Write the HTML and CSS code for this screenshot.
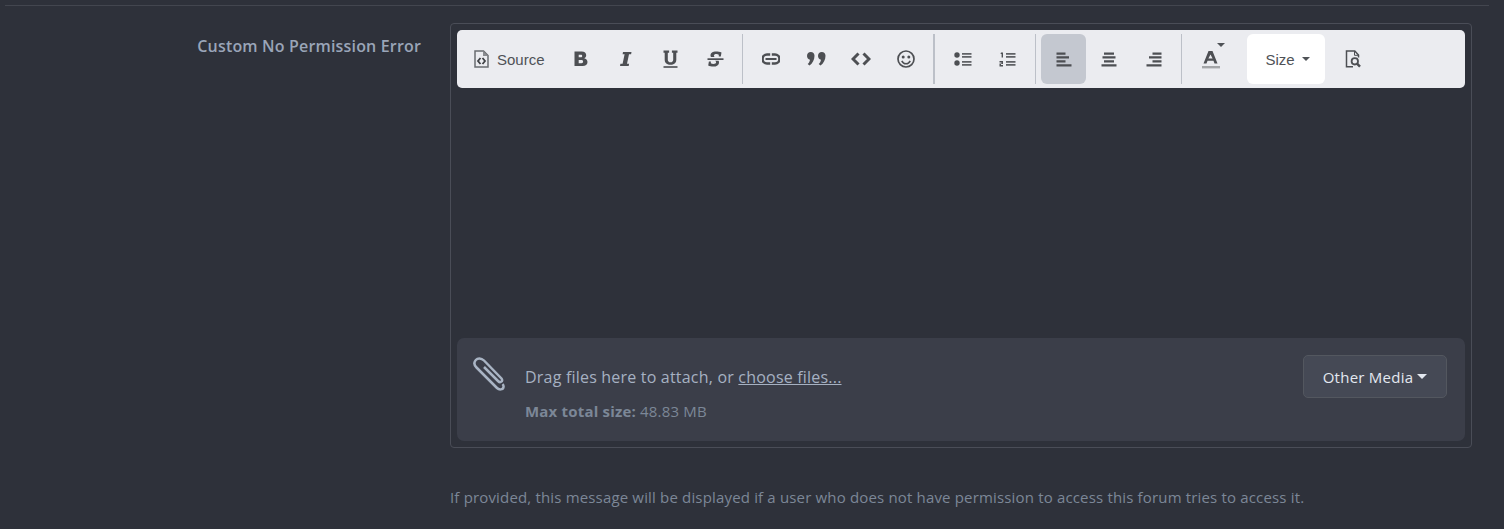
FILE: index.html
```html
<!DOCTYPE html>
<html lang="en">
<head>
<meta charset="utf-8">
<title>Custom No Permission Error</title>
<link rel="stylesheet" href="styles.css">
</head>
<body>
<hr class="rule">
<div class="row">
  <div class="label">Custom No Permission Error</div>
  <div class="field">
    <div class="editor">
      <div class="toolbar">
        <button class="btn source">
          <svg viewBox="0 0 15 18" width="15" height="18"><path d="M1 1h8.500l4.500 4.500V17H1z" fill="none" stroke="#6a6c70" stroke-width="1.500"/><path d="M9 1v5h5" fill="#8a8c90"/><path d="M6.500 8 4 11l2.500 3M8.500 8 11 11l-2.500 3" fill="none" stroke="#404246" stroke-width="1.800"/></svg>
          <span>Source</span>
        </button>
        <button class="btn"><svg viewBox="0 0 14 16" width="14" height="16"><path d="M.5.500h7.200c2.900 0 4.500 1.400 4.500 3.700 0 1.500-.8 2.600-2 3.100 1.800.4 3.300 1.700 3.300 3.800 0 2.700-2 3.900-4.900 3.900H.5zM4.700 3.700v2.600h2.200c.9 0 1.300-.5 1.300-1.300s-.4-1.300-1.300-1.300zm0 5.300v3.300h2.800c1 0 1.600-.6 1.600-1.700 0-1-.6-1.600-1.600-1.600z" fill="#4d4f53"/></svg></button>
        <button class="btn"><svg viewBox="0 0 14 16" width="14" height="16"><path d="M4 1h8.500l-.4 2.300H10L8 12.700h2.100l-.4 2.300H1l.4-2.300h2.200L5.600 3.300H3.600z" fill="#4d4f53"/></svg></button>
        <button class="btn"><svg viewBox="0 0 15 18" width="15" height="18"><path d="M.5.500h5.600v2.200H4.800v6.800c0 1.900 1 2.800 2.700 2.800s2.700-.9 2.700-2.800V2.700H8.900V.5h5.600v2.200h-1.200v7c0 3.400-2.400 5-5.800 5s-5.800-1.600-5.800-5v-7H.5z" fill="#4d4f53"/><rect x="0.500" y="16" width="14" height="2" fill="#6a6c70"/></svg></button>
        <button class="btn"><svg viewBox="0 0 17 16" width="17" height="16"><path d="M14.500 1.500l-.7 3.900h-2l0-1.700c-.7-.4-1.500-.6-2.400-.6-1.500 0-2.500.6-2.500 1.600 0 .6.300 1 .9 1.400H4.100C3.700 5.900 3.500 5.200 3.500 4.400 3.500 1.900 5.800.5 9 .5c2 0 4 .4 5.500 1zM11.600 9.800c.3.500.4 1 .4 1.600 0 2.700-2.500 4.200-5.600 4.200-2 0-3.900-.5-5.200-1.200l.7-4h2L3.800 12.300c.7.500 1.600.7 2.600.7 1.700 0 2.700-.6 2.700-1.700 0-.6-.3-1.100-.9-1.500z" fill="#4d4f53"/><rect x="0.500" y="7.300" width="16" height="1.700" fill="#4d4f53"/></svg></button>
        <span class="sep"></span>
        <button class="btn"><svg viewBox="0 0 18 12" width="18" height="12"><path d="M8.200 1.500H5a4.500 4.500 0 0 0 0 9h3.200M9.800 1.500H13a4.500 4.500 0 0 1 0 9H9.800" fill="none" stroke="#4d4f53" stroke-width="2.600"/><path d="M3.500 5h11v2h-11z" fill="#4d4f53"/></svg></button>
        <button class="btn nudge"><svg viewBox="0 0 19 14" width="19" height="14"><path d="M3.800 0C6 0 7.500 1.500 7.500 3.700c0 4-2 7.600-5 9.800L.7 12c1.200-1.200 2-2.300 2.300-4.300C1.300 7.400 0 5.800 0 3.900 0 1.700 1.600 0 3.800 0zM14.800 0C17 0 18.500 1.500 18.500 3.700c0 4-2 7.600-5 9.800L11.700 12c1.200-1.200 2-2.300 2.300-4.300-1.700-.3-3-1.900-3-3.800C11 1.700 12.600 0 14.800 0z" fill="#4d4f53"/></svg></button>
        <button class="btn"><svg viewBox="0 0 20 14" width="20" height="14"><path d="M7.500 1.500 2 7l5.500 5.500M12.500 1.500 18 7l-5.500 5.500" fill="none" stroke="#4d4f53" stroke-width="3"/></svg></button>
        <button class="btn"><svg viewBox="0 0 18 18" width="18" height="18"><circle cx="9" cy="9" r="8" fill="none" stroke="#4d4f53" stroke-width="1.700"/><circle cx="6.200" cy="7" r="1.500" fill="#4d4f53"/><circle cx="11.800" cy="7" r="1.500" fill="#4d4f53"/><path d="M4.800 10.800c1 2 2.500 3 4.200 3s3.200-1 4.200-3" fill="none" stroke="#4d4f53" stroke-width="1.600"/></svg></button>
        <span class="sep thick"></span>
        <button class="btn shift"><svg viewBox="0 0 18 14" width="18" height="14"><circle cx="3" cy="3" r="2.700" fill="#4d4f53"/><circle cx="3" cy="11" r="2.700" fill="#4d4f53"/><path d="M8 1h9.500v1.800H8zM8 3.900h9.500v1.800H8zM8 9h9.500v1.800H8zM8 11.900h9.500v1.800H8z" fill="#606266"/></svg></button>
        <button class="btn shift"><svg viewBox="0 0 17 15" width="17" height="15"><path d="M2 .5h2v5H2.600V2H1.500zM.5 9h3.500v3H2v1h2v1.500H.5v-3h2v-1H.5z" fill="#4d4f53"/><path d="M7 1h9.500v1.800H7zM7 4h9.500v1.800H7zM7 9h9.500v1.800H7zM7 12h9.500v1.800H7z" fill="#606266"/></svg></button>
        <span class="sep"></span>
        <button class="btn active"><svg viewBox="0 0 16 15" width="16" height="15"><path d="M.5 .5h9v2.200h-9zM.5 4.300h12.500v2.200H.5zM.5 8.200h9v2.200h-9zM.5 12.200h15v2.200H.5z" fill="#4d4f53"/></svg></button>
        <button class="btn"><svg viewBox="0 0 16 15" width="16" height="15"><path d="M3 .5h10v2.200H3zM1.500 4.300h13v2.200h-13zM3 8.200h10v2.200H3zM.5 12.200h15v2.200H.5z" fill="#4d4f53"/></svg></button>
        <button class="btn"><svg viewBox="0 0 16 15" width="16" height="15"><path d="M6.500 .5h9v2.200h-9zM3 4.300h12.500v2.200H3zM6.500 8.200h9v2.200h-9zM.5 12.200h15v2.200H.5z" fill="#4d4f53"/></svg></button>
        <span class="sep after"></span>
        <button class="btn color">
          <svg viewBox="0 0 20 19" width="20" height="19"><path d="M7.500 1h4l5 12.500h-3l-1-2.700H6.500l-1 2.700h-3zm2 3.500L7.400 8.500h4.200z" fill="#4d4f53"/><rect x="1" y="16" width="18" height="2.400" fill="#a3a5a8"/></svg>
          <span class="caret small"></span>
        </button>
        <button class="btn size"><span>Size</span><span class="caret"></span></button>
        <button class="btn nudge"><svg viewBox="0 0 17 18" width="17" height="18"><path d="M8 16.800H1.500V1h8.300l3.700 4v2.500" fill="none" stroke="#4d4f53" stroke-width="1.500"/><path d="M9.500 1v4.300h4" fill="none" stroke="#4d4f53" stroke-width="1"/><circle cx="9.800" cy="11.300" r="3.200" fill="none" stroke="#4d4f53" stroke-width="1.800"/><path d="m12 13.700 3 3" stroke="#4d4f53" stroke-width="2.400"/></svg></button>
      </div>
      <div class="area"></div>
      <div class="attach">
        <svg class="clip" viewBox="0 0 32 34" width="32" height="34"><path d="M11 10 25 24c2.500 2.500 5.500 0 3.500-2.500L11 3.500C8 .5 4.500 1 2.800 3 1 5 1 8 3.500 10.500L24 31c2 2 6 2 6.500-1 .2-1-.2-2-1-2.800" fill="none" stroke="#a9b4c4" stroke-width="2.500"/></svg>
        <div class="drop">
          <div class="drag">Drag files here to attach, or <a class="choose">choose files...</a></div>
          <div class="max"><b>Max total size:</b> 48.83 MB</div>
        </div>
        <button class="media">Other Media<span class="caret light"></span></button>
      </div>
    </div>
    <p class="hint">If provided, this message will be displayed if a user who does not have permission to access this forum tries to access it.</p>
  </div>
</div>
</body>
</html>
```
FILE: styles.css
```css
* { box-sizing: border-box; }
html, body { margin: 0; height: 529px; overflow: hidden; }
body {
  background: #2e313a;
  font-family: "Open Sans", "Noto Sans", sans-serif;
  color: #9aa5b5;
}
.rule {
  margin: 5px 15px 0 5px;
  border: 0;
  height: 1px;
  background: #43464f;
}
.row { display: flex; margin-top: 17px; }
.label {
  width: 421px;
  padding-top: 12px;
  text-align: right;
  font-size: 16px;
  line-height: 22px;
  font-weight: 600;
  color: #9aa5b8;
  letter-spacing: .17px;
}
.field { margin-left: 29px; width: 1022px; }
.editor {
  height: 425px;
  border: 1px solid #4a4d57;
  border-radius: 4px;
  padding: 6px;
  display: flex;
  flex-direction: column;
}
.toolbar {
  height: 58px;
  background: #ebecf0;
  border-radius: 5px;
  display: flex;
  align-items: center;
  padding-left: 8px;
  flex: none;
}
.btn {
  width: 45px;
  height: 50px;
  border: 0;
  padding: 0;
  margin: 0;
  background: none;
  border-radius: 6px;
  display: flex;
  align-items: center;
  justify-content: center;
  font-family: "Liberation Sans", Arial, sans-serif;
  font-size: 15px;
  color: #4f5257;
  flex: none;
}
.btn svg { display: block; }
.shift svg { margin-right: 2px; }
.nudge svg { margin-left: 2px; }
.source { width: 93px; justify-content: flex-start; padding-left: 9px; gap: 8px; }
.sep { width: 1px; height: 50px; background: #bcc0c8; margin: 0 5px 0 4px; flex: none; }
.sep.thick { width: 2px; margin: 0 6px 0 5px; }
.sep.after { margin-left: 5px; }
.active { background: #c4c8d0; }
.color { width: 48px; position: relative; justify-content: flex-start; padding-left: 14px; }
.caret {
  display: inline-block;
  width: 0; height: 0;
  border-left: 4px solid transparent;
  border-right: 4px solid transparent;
  border-top: 4px solid #4f5257;
}
.caret.small { position: absolute; top: 9px; right: 10px; }
.size { width: 78px; margin: 0 5px 0 12px; background: #fff; gap: 7px; padding-left: 3px; }
.area { flex: 1; }
.attach {
  height: 103px;
  flex: none;
  background: #3b3e49;
  border-radius: 7px;
  display: flex;
  align-items: flex-start;
  padding: 17px 18px 0 16px;
}
.clip { flex: none; margin-top: 2px; }
.drop { flex: 1; padding-left: 20px; padding-top: 10px; }
.drag { font-size: 16px; line-height: 24px; color: #a6b1c2; letter-spacing: .2px; }
.choose { text-decoration: underline; }
.max { margin-top: 12px; font-size: 15px; line-height: 20px; color: #7c8797; letter-spacing: .19px; }
.max b { font-weight: 700; }
.media {
  width: 144px;
  height: 43px;
  background: #454955;
  border: 1px solid #53575f;
  border-radius: 5px;
  font-family: "Open Sans", "Noto Sans", sans-serif;
  font-size: 15px;
  letter-spacing: .25px;
  color: #e3e8f0;
  display: flex;
  align-items: center;
  justify-content: center;
  gap: 4px;
  padding: 0;
  flex: none;
}
.caret.light { border-left-width: 5px; border-right-width: 5px; border-top: 5px solid #e3e8f0; }
.hint {
  margin: 39px 0 0;
  font-size: 15px;
  letter-spacing: .165px;
  line-height: 20px;
  color: #7c8797;
}
```
